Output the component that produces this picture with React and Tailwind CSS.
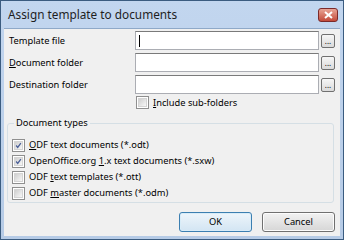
import React from 'react';

const font = { fontFamily: '"Noto Sans", "Liberation Sans", sans-serif' };

function Browse() {
    return (
        <button className="ml-[2px] flex h-[14px] w-[14px] items-end justify-center rounded-[2px] border border-[#707070] bg-gradient-to-b from-[#f6f6f6] to-[#dadada] pb-[2px] text-[8px] leading-none text-black">
            ...
        </button>
    );
}

function Check({ checked }) {
    return (
        <span className="flex h-[13px] w-[13px] shrink-0 items-center justify-center border border-[#8f8f8f] bg-white">
            <span className="flex h-[9px] w-[9px] items-center justify-center border border-[#d4d4d4] bg-gradient-to-br from-[#cfcfcf] to-[#f7f7f7]">
                {checked && (
                    <svg width="9" height="9" viewBox="0 0 9 9">
                        <path d="M1.5 4.5 L3.5 7 L7.5 1.5" fill="none" stroke="#4a5f97" strokeWidth="1.6" />
                    </svg>
                )}
            </span>
        </span>
    );
}

function Field({ label, first }) {
    return (
        <div className="flex h-[19px] items-center">
            <span className="w-[131px] pl-[5px]">{label}</span>
            <div className="flex h-[19px] w-[184px] items-center border border-[#abadb3] border-t-[#7a7a7a] bg-white pl-[3px]">
                {first && <span className="h-[12px] w-px bg-black" />}
            </div>
            <Browse />
        </div>
    );
}

function TypeRow({ checked, children }) {
    return (
        <div className="flex h-[16px] items-center gap-[4px]">
            <Check checked={checked} />
            <span>{children}</span>
        </div>
    );
}

export default function App() {
    return (
        <div style={font} className="flex h-[240px] w-[344px] flex-col border border-[#3b5c80] bg-gradient-to-b from-[#c2d6ef] to-[#b6cbe6] text-black">
            {/* Title bar */}
            <div className="flex h-[27px] shrink-0 items-center justify-between pl-[7px] pr-[5px]">
                <span className="text-[11.8px] text-[#1e1e1e]">Assign template to documents</span>
                <div className="flex h-[14px] w-[20px] items-center justify-center rounded-[3px] border border-[#7b2a2a] bg-gradient-to-b from-[#e8a496] to-[#c2493a]">
                    <svg width="9" height="8" viewBox="0 0 9 8">
                        <path d="M1 1 L8 7 M8 1 L1 7" stroke="#fff" strokeWidth="2" />
                    </svg>
                </div>
            </div>

            {/* Client */}
            <div className="mx-[3px] mb-[3px] flex flex-1 flex-col border-t border-[#8fa9c8] bg-[#f0f0f0] pt-[2px] text-[9.3px]">
                <div className="flex flex-col gap-[3px]">
                    <Field label="Template file" first />
                    <Field label={<><u>D</u>ocument folder</>} />
                    <Field label="Destination folder" />
                </div>
                <div className="mt-[2px] flex h-[13px] items-center gap-[4px] pl-[132px]">
                    <Check />
                    <span><u>I</u>nclude sub-folders</span>
                </div>

                <fieldset className="ml-[3px] mr-[6px] mt-[7px] rounded-[3px] border border-[#d5dfe5] px-[4px] pb-[1px] pt-[7px]">
                    <legend className="ml-[2px] px-[2px] leading-[14px]">Document types</legend>
                    <TypeRow checked><u>O</u>DF text documents (*.odt)</TypeRow>
                    <TypeRow checked>OpenOffice.org <u>1</u>.x text documents (*.sxw)</TypeRow>
                    <TypeRow>ODF <u>t</u>ext templates (*.ott)</TypeRow>
                    <TypeRow>ODF <u>m</u>aster documents (*.odm)</TypeRow>
                </fieldset>

                <div className="mr-[5px] mt-[9px] flex justify-end gap-[10px]">
                    <button className="h-[20px] w-[73px] rounded-[3px] border border-[#3c7fb1] bg-gradient-to-b from-[#eef5fb] to-[#d3e5f3] shadow-[inset_0_0_0_1px_#d8ecf8]">
                        OK
                    </button>
                    <button className="h-[20px] w-[73px] rounded-[3px] border border-[#707070] bg-gradient-to-b from-[#f2f2f2] to-[#d6d6d6] shadow-[inset_0_0_0_1px_#fcfcfc]">
                        Cancel
                    </button>
                </div>
            </div>
        </div>
    );
}
